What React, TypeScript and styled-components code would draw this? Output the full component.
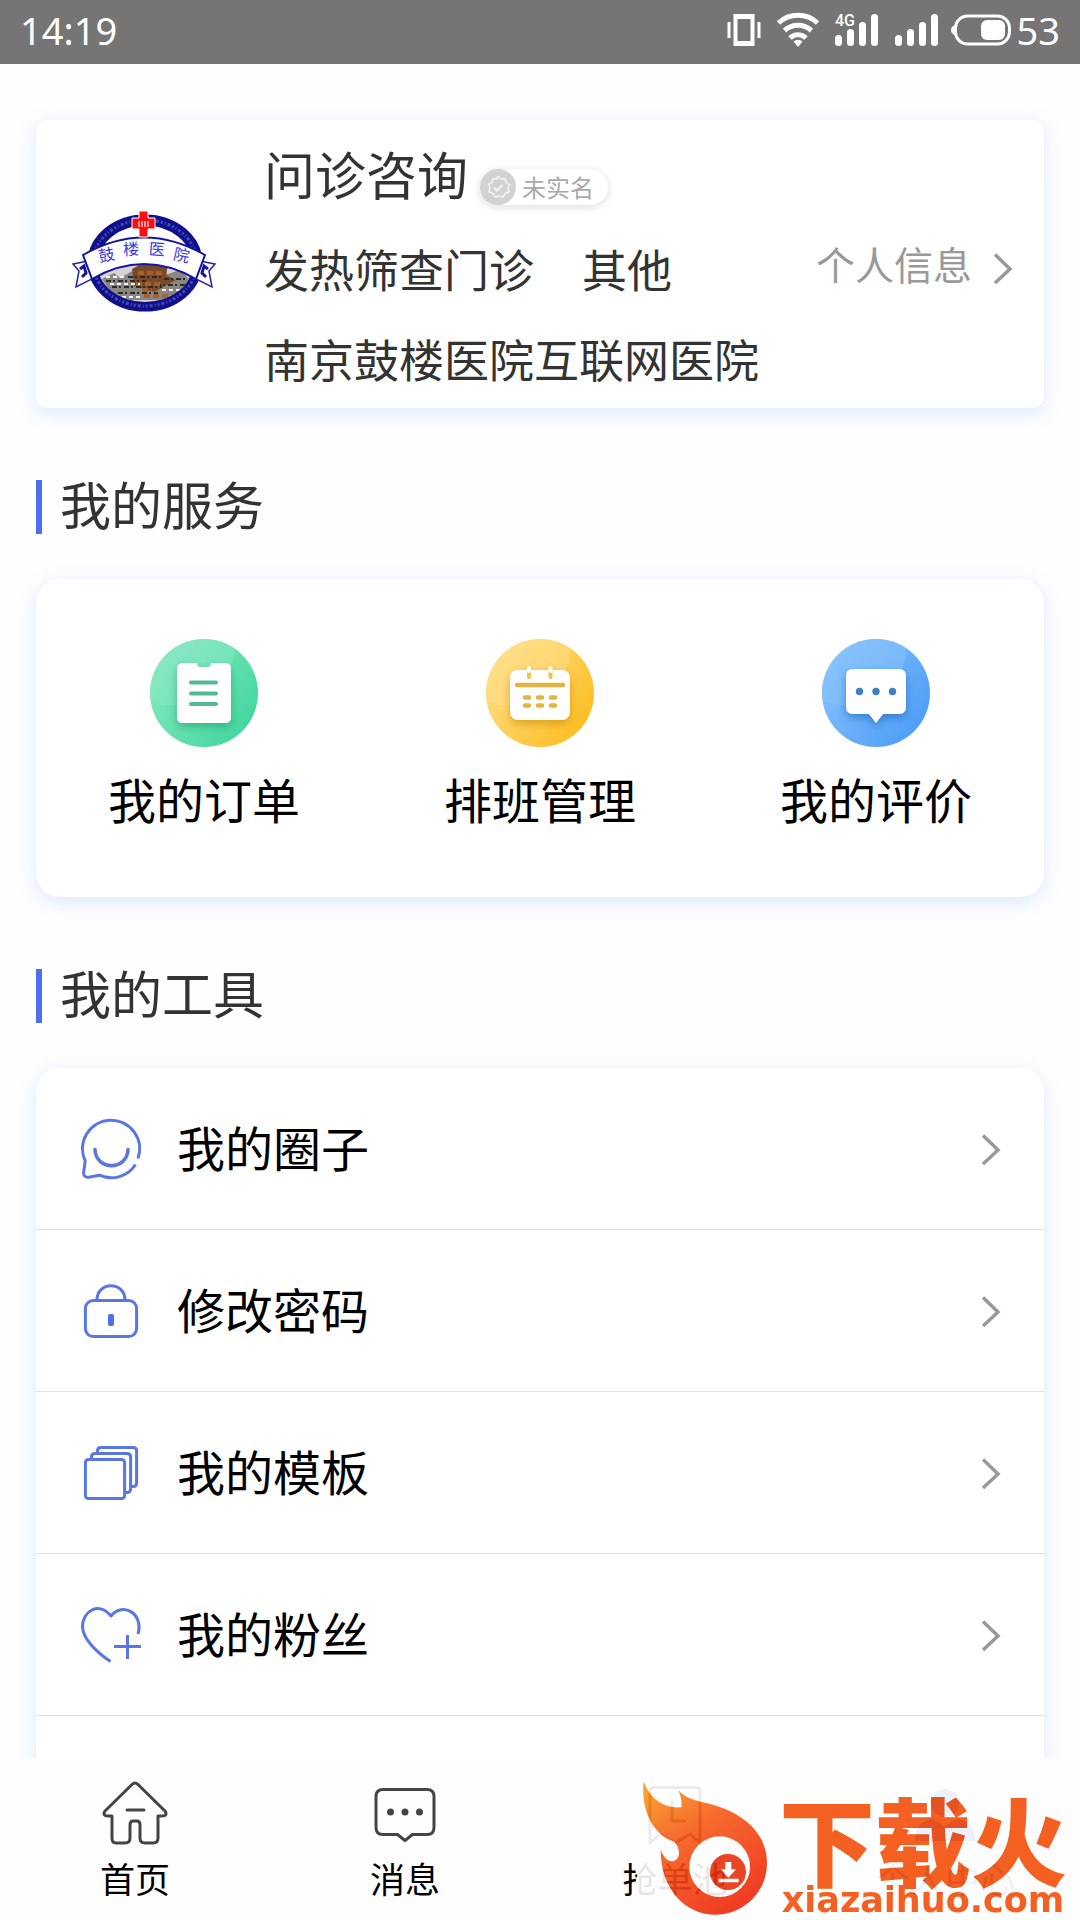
import React from "react";
import styled, { createGlobalStyle } from "styled-components";

const GlobalStyle = createGlobalStyle`
  * { box-sizing: border-box; }
  body {
    margin: 0;
    background: #fefefe;
    color: #333;
    font-family: "Noto Sans CJK SC", "Noto Sans", sans-serif;
  }
  a { color: inherit; text-decoration: none; }
  h1, h2, p, ul { margin: 0; padding: 0; font-weight: 400; }
  ul { list-style: none; }
  svg { display: block; flex: none; overflow: visible; }
`;

const Screen = styled.div`
  position: relative;
  display: flex;
  flex-direction: column;
  height: 100vh;
  overflow: hidden;
`;

const StatusBar = styled.header`
  flex: none;
  display: flex;
  align-items: center;
  justify-content: space-between;
  height: 64px;
  padding: 0 20px 4px;
  background: #757575;
  color: #fff;
  font-family: "Noto Sans", sans-serif;
  font-size: 38px;
  line-height: 60px;
`;

const StatusIcons = styled.div`
  display: flex;
  align-items: center;
  gap: 16px;
`;

const BatteryLevel = styled.span`
  display: flex;
  align-items: center;
  gap: 6px;
  margin-left: -4px;
`;

const Content = styled.main`
  flex: 1;
  min-height: 0;
  padding: 56px 36px 0;
  overflow-y: auto;
  scrollbar-width: none;
`;

const Card = styled.section<{ $radius: number }>`
  background: #fff;
  border-radius: ${(p) => p.$radius}px;
  box-shadow: 0 5px 20px rgba(80, 140, 255, 0.2);
`;

const ProfileCard = styled(Card)`
  display: flex;
  align-items: center;
  min-height: 288px;
  padding: 20px 31px 18px 36px;
`;

const ProfileInfo = styled.div`
  flex: 1;
  display: flex;
  flex-direction: column;
  gap: 30px;
  padding-left: 48px;
`;

const NameRow = styled.div`
  display: flex;
  align-items: flex-end;
  gap: 12px;
  padding-bottom: 4px;
`;

const Name = styled.h1`
  font-size: 51px;
  line-height: 64px;
`;

const Badge = styled.span`
  display: flex;
  align-items: center;
  gap: 6px;
  height: 36px;
  padding-right: 14px;
  border-radius: 18px;
  background: #fff;
  box-shadow: 0 2px 8px rgba(0, 0, 0, 0.14);
  color: #aaa;
  font-size: 24px;
  line-height: 34px;
`;

const InfoLine = styled.p`
  display: flex;
  gap: 48px;
  font-size: 45px;
  line-height: 60px;
`;

const ProfileLink = styled.a`
  display: flex;
  align-items: center;
  gap: 21px;
  padding-top: 6px;
  color: #999;
  font-size: 39px;
  line-height: 60px;
`;

const ProfileLinkText = styled.span`
  padding-bottom: 10px;
`;

const SectionTitle = styled.h2`
  display: flex;
  gap: 18px;
  height: 54px;
  margin: 72px 0 45px;
  font-size: 51px;
  line-height: 46px;

  &::before {
    content: "";
    width: 6px;
    background: #4e6ef2;
  }
`;

const Services = styled(Card)`
  display: grid;
  grid-template-columns: repeat(3, 1fr);
  padding: 60px 0 68px;
`;

const Service = styled.a`
  display: flex;
  flex-direction: column;
  align-items: center;
  gap: 20px;
  color: #000;
  font-size: 48px;
  line-height: 62px;
`;

const ToolRow = styled.li`
  height: 162px;
  border-bottom: 1px solid #e2e2e2;
`;

const ToolLink = styled.a`
  display: flex;
  align-items: center;
  height: 100%;
  padding: 0 43px 0 45px;
  gap: 36px;
  color: #000;
  font-size: 48px;
  line-height: 60px;
`;

const ToolName = styled.span`
  flex: 1;
  padding-bottom: 6px;
`;

const TabBar = styled.nav`
  flex: none;
  display: grid;
  grid-template-columns: repeat(4, 1fr);
  height: 162px;
  padding-top: 19px;
  background: #fefefe;
`;

const Tab = styled.a<{ $active?: boolean }>`
  display: flex;
  flex-direction: column;
  align-items: center;
  gap: 5px;
  color: ${(p) => (p.$active ? "#4e6ef2" : "#000")};
  font-size: 35px;
  line-height: 48px;
`;

const Watermark = styled.aside`
  position: absolute;
  right: 4px;
  bottom: 0;
  display: flex;
  align-items: flex-start;
  height: 142px;
  background: #fff;
  opacity: 0.9;
  color: #f4500a;
`;

const WatermarkText = styled.div`
  display: flex;
  flex-direction: column;
  align-items: center;
  width: 306px;
  padding-top: 12px;
`;

const WatermarkName = styled.span`
  font-size: 96px;
  font-weight: 900;
  line-height: 96px;
`;

const WatermarkSite = styled.span`
  font-family: "DejaVu Sans", sans-serif;
  font-size: 35px;
  font-weight: 700;
  line-height: 28px;
`;

const VibrateIcon = () => (
  <svg width="34" height="34" viewBox="0 0 34 34" fill="#fff">
    <path fillRule="evenodd" d="M6.500 1h21v32h-21zM10.500 6v22h13v-22z" />
    <path d="M.5 9h3v16h-3zM30.500 9h3v16h-3z" />
  </svg>
);

const WifiIcon = () => (
  <svg width="42" height="36" viewBox="0 0 42 36" fill="none" stroke="#fff" strokeWidth="5">
    <path d="M1.500 11C12.500 .8 29.500 .8 40.500 11M7.500 18.500C15.500 11.500 26.500 11.500 34.500 18.500M13 26C18 21.500 24 21.500 29 26" />
    <path d="M21 35l-4.500-5.500q4.500-3.500 9 0z" fill="#fff" stroke="none" />
  </svg>
);

const SignalIcon = ({ label }: { label?: string }) => (
  <svg width="44" height="34" viewBox="0 0 44 34" fill="#fff">
    <rect x="0" y="22" width="7" height="11" rx="3.500" />
    <rect x="12" y="16" width="7" height="17" rx="3.500" />
    <rect x="24" y="9" width="7" height="24" rx="3.500" />
    <rect x="36" y="1" width="7" height="32" rx="3.500" />
    {label && (
      <text x="0" y="13" fontSize="16" fontWeight="500" fontFamily="Roboto, sans-serif">
        {label}
      </text>
    )}
  </svg>
);

const BatteryIcon = () => (
  <svg width="60" height="32" viewBox="0 0 60 32">
    <rect x="4.500" y="2" width="54" height="28" rx="12" fill="none" stroke="#fff" strokeWidth="3" />
    <path d="M4 11v10q-4-1.500-4-5t4-5z" fill="#fff" />
    <rect x="30" y="6" width="24" height="20" rx="6" fill="#fff" />
  </svg>
);

const HospitalLogo = () => (
  <svg width="144" height="144" viewBox="0 0 144 144">
    <defs>
      <clipPath id="logoInner">
        <ellipse cx="73" cy="70" rx="48" ry="39" />
      </clipPath>
    </defs>
    <ellipse cx="73" cy="70" rx="52" ry="43" fill="#fff" stroke="#10108c" strokeWidth="11" />
    <ellipse cx="73" cy="70" rx="52" ry="43" fill="none" stroke="#6a6fc8" strokeWidth="3" strokeDasharray="2 2 1 2 3 2" opacity="0.600" />
    <g clipPath="url(#logoInner)">
      <path d="M24 82q48-26 100-4v34H24z" fill="#d6d4d0" />
      <path d="M30 86l12-6 6 5 14-8 8 5 12-10 14 9 12-4 10 10-8 20H44z" fill="#8a8681" />
      <path d="M60 76l16-9 20 5-2 10 10 5-22 12-20-6z" fill="#7a4a28" />
      <path d="M34 88h40M40 94h50M46 100h40M56 84h34M84 92h30M92 86h24" stroke="#2d2926" strokeWidth="2" strokeDasharray="5 2 2 3" />
      <path d="M66 80h26M64 91h24M72 103h30M70 97h10" stroke="#a5602c" strokeWidth="4" strokeDasharray="6 3" />
      <path d="M38 91h30M90 97h20M50 104h18M34 84h20" stroke="#f2f2ee" strokeWidth="2" strokeDasharray="4 3" />
    </g>
    <path d="M16 68l-15 3 6 7-3 16 18-9zM128 68l15 3-6 7 3 16-18-9z" fill="#fff" stroke="#2222a8" strokeWidth="1.500" />
    <path d="M8 76l4-3 2 7-4 4M136 76l-4-3-2 7 4 4" fill="none" stroke="#1414a0" strokeWidth="3" />
    <path d="M11 62Q72 27 133 62L124 86Q72 56 20 86z" fill="#fff" stroke="#1414a0" strokeWidth="2" />
    <g fill="#3b3be0" fontSize="16" fontFamily="Noto Sans CJK SC, sans-serif">
      <text x="26" y="68" transform="rotate(-12 34 60)">鼓</text>
      <text x="51" y="62" transform="rotate(-4 59 54)">楼</text>
      <text x="77" y="62" transform="rotate(4 85 54)">医</text>
      <text x="102" y="68" transform="rotate(12 110 60)">院</text>
    </g>
    <path d="M67 18h9v7h7v11h-7v8h-9v-8h-7V25h7z" fill="#fb1010" stroke="#fff" strokeWidth="1" />
    <path d="M67 28v6M70 28v6M73 28v6M76 28v6" stroke="#ffc4c4" strokeWidth="1.500" />
  </svg>
);

const VerifyIcon = () => (
  <svg width="36" height="36" viewBox="0 0 36 36">
    <circle cx="18" cy="18" r="18" fill="#d2d2d2" />
    <path
      d="M18 7.500l3 2.500 4-.5 1 4 3.500 2-1.500 3.500 1 4-4 1.500-2 3.500-4-1-4 1-2-3.500-4-1.500 1-4L8.500 15.500l3.500-2 1-4 4 .5z"
      fill="none" stroke="#f4f4f4" strokeWidth="1.500" strokeLinejoin="round"
    />
    <path d="M14 18.500l3 3 5.500-5.500" fill="none" stroke="#f4f4f4" strokeWidth="2" />
  </svg>
);

const Chevron = () => (
  <svg width="20" height="32" viewBox="0 0 20 32" fill="none" stroke="#999" strokeWidth="3.500">
    <path d="M2 2.500L17 17L2 31" />
  </svg>
);

type DiscProps = { id: string; from: string; to: string; shade: string; children: React.ReactNode };

const Disc = ({ id, from, to, shade, children }: DiscProps) => (
  <svg width="108" height="108" viewBox="0 0 108 108">
    <defs>
      <linearGradient id={`${id}Fill`} x1="0.100" y1="0.200" x2="0.900" y2="0.800">
        <stop offset="0" stopColor={from} />
        <stop offset="1" stopColor={to} />
      </linearGradient>
      <filter id={`${id}Shadow`} x="-30%" y="-30%" width="160%" height="160%">
        <feDropShadow dx="0" dy="4" stdDeviation="4" floodColor={shade} floodOpacity="0.600" />
      </filter>
      <clipPath id={`${id}Clip`}>
        <circle cx="54" cy="54" r="54" />
      </clipPath>
    </defs>
    <circle cx="54" cy="54" r="54" fill={`url(#${id}Fill)`} />
    <path d="M0 0h84v18A62 62 0 0 1 0 62z" fill={from} opacity="0.550" clipPath={`url(#${id}Clip)`} />
    <g filter={`url(#${id}Shadow)`}>{children}</g>
  </svg>
);

const OrdersIcon = () => (
  <Disc id="orders" from="#86e8c3" to="#45d79f" shade="#1f9c6c">
    <path d="M33 24h14q0 4 3 4h8q3 0 3-4h14q6 0 6 6v48q0 6-6 6H33q-6 0-6-6V30q0-6 6-6z" fill="#fff" />
    <path d="M41 43.500h25M41 54.500h25M41 65h25" stroke="#52bb93" strokeWidth="4" strokeLinecap="round" />
  </Disc>
);

const ScheduleIcon = () => (
  <Disc id="schedule" from="#ffdf87" to="#fdbe25" shade="#c88a00">
    <rect x="24" y="31" width="60" height="50" rx="8" fill="#fff" />
    <path d="M43 29v9M64.500 29v9" stroke="#f2c14a" strokeWidth="4" strokeLinecap="round" />
    <path d="M43 29v3M64.500 29v3" stroke="#fff" strokeWidth="4" strokeLinecap="round" />
    <path d="M31 46h46" stroke="#e5b441" strokeWidth="4.500" strokeLinecap="round" />
    <path d="M39 58.500h4M52 58.500h4M65 58.500h4M39 66.500h4M52 66.500h4M65 66.500h4" stroke="#e5b441" strokeWidth="4.500" strokeLinecap="round" />
  </Disc>
);

const ReviewsIcon = () => (
  <Disc id="reviews" from="#86c1fc" to="#4f9ff7" shade="#1f64b8">
    <path d="M31 30h46q7 0 7 7v31q0 7-7 7H61l-7 9-7-9H31q-7 0-7-7V37q0-7 7-7z" fill="#fff" />
    <g fill="#3f7fc4">
      <circle cx="37.500" cy="52.500" r="3.700" />
      <circle cx="54" cy="52.500" r="3.700" />
      <circle cx="70.500" cy="52.500" r="3.700" />
    </g>
  </Disc>
);

const LineIcon = ({ children }: { children: React.ReactNode }) => (
  <svg width="60" height="60" viewBox="0 0 60 60" fill="none" stroke="#5a76e4" strokeWidth="3" strokeLinejoin="round">
    {children}
  </svg>
);

const CircleIcon = () => (
  <LineIcon>
    <path d="M57 39.500A28.600 28.600 0 1 0 4.200 42L2.600 53.500Q2.400 58.700 7.500 58.200L18.500 56.200A28.600 28.600 0 0 0 54.500 45.500" />
    <path d="M14 30.500C15 52 46 52 47 30.500" strokeWidth="3.600" strokeLinecap="round" />
  </LineIcon>
);

const LockIcon = () => (
  <LineIcon>
    <rect x="4.400" y="19.400" width="51.200" height="36.200" rx="8" />
    <path d="M16 19C16 0 44 0 44 19" />
    <rect x="27" y="33" width="6" height="12" rx="2" fill="#4e6ef2" stroke="none" />
  </LineIcon>
);

const TemplateIcon = () => (
  <LineIcon>
    <rect x="4.400" y="16.400" width="39.200" height="39.200" rx="3" />
    <path d="M10.500 15.500V14q0-3.600 3.500-3.600h32q3.600 0 3.600 3.600v32q0 3.600-3.600 3.600h-2M16.500 9.500V8q0-3.600 3.500-3.600h32q3.600 0 3.600 3.600v32q0 3.600-3.600 3.600h-2" />
  </LineIcon>
);

const FansIcon = () => (
  <LineIcon>
    <path d="M57 29C63 9 42-4 30 11C18-4 1.500 6 1.500 21.500C1.500 33 15 47 29.500 56.500" />
    <path d="M33 41.500h27M46.500 30v24" />
  </LineIcon>
);

const TabIcon = ({ children }: { children: React.ReactNode }) => (
  <svg width="72" height="72" viewBox="0 0 72 72" fill="none" stroke="#444" strokeWidth="3" strokeLinejoin="round" strokeLinecap="round">
    {children}
  </svg>
);

const HomeIcon = () => (
  <TabIcon>
    <path d="M33 7.500q3-3 6 0L66 34q3 5-3 5h-4v22q0 5-5 5H46q-5 0-5-5V48q0-4-3-4h-4q-3 0-3 4v13q0 5-5 5h-9q-4 0-4-5V39H9q-6 0-3-5z" />
    <path d="M28 33h17" />
  </TabIcon>
);

const MessageIcon = () => (
  <TabIcon>
    <path d="M14 12.500h44q7 0 7 7v31q0 7-7 7H43.500L36 63.500l-7.500-6H14q-7 0-7-7v-31q0-7 7-7z" />
    <g fill="#444" stroke="none">
      <circle cx="21.500" cy="35" r="3.500" />
      <circle cx="36" cy="35" r="3.500" />
      <circle cx="50.500" cy="35" r="3.500" />
    </g>
  </TabIcon>
);

const OrderPoolIcon = () => (
  <TabIcon>
    <path d="M14 10.500h44q3 0 3 3V66l-10-9-15 9-15-9-10 9V13.500q0-3 3-3z" />
    <path d="M33 24v20h13" />
  </TabIcon>
);

const PersonIcon = () => (
  <TabIcon>
    <g fill="#4e6ef2" stroke="none">
      <circle cx="36" cy="26" r="14" />
      <path d="M6 64q0-20 18-22l12 7 12-7q18 2 18 22z" />
    </g>
  </TabIcon>
);

const FlameLogo = () => (
  <svg width="133" height="140" viewBox="110 113 399 420">
    <defs>
      <linearGradient id="flameFill" x1="0" y1="0" x2="0.600" y2="1">
        <stop offset="0" stopColor="#fba01e" />
        <stop offset="0.450" stopColor="#f75a18" />
        <stop offset="1" stopColor="#ee2a0c" />
      </linearGradient>
    </defs>
    <path
      d="M130 123C150 180 195 205 243 201C246 182 240 168 235 150C265 188 320 180 390 213C460 248 500 300 500 368C500 455 430 523 345 523C250 523 180 440 181 328C190 352 205 366 220 362C242 355 240 322 222 304C150 280 122 200 130 123Z"
      fill="url(#flameFill)"
    />
    <circle cx="358" cy="379" r="91" fill="#fff" />
    <circle cx="383" cy="395" r="54" fill="#e8310f" />
    <path d="M375 365h18v22h14l-23 25-23-25h14zM355 415h60v11h-60z" fill="#fff" />
  </svg>
);

const services = [
  { name: "我的订单", Icon: OrdersIcon },
  { name: "排班管理", Icon: ScheduleIcon },
  { name: "我的评价", Icon: ReviewsIcon },
];

const tools = [
  { name: "我的圈子", Icon: CircleIcon },
  { name: "修改密码", Icon: LockIcon },
  { name: "我的模板", Icon: TemplateIcon },
  { name: "我的粉丝", Icon: FansIcon },
];

const tabs = [
  { name: "首页", Icon: HomeIcon },
  { name: "消息", Icon: MessageIcon },
  { name: "抢单池", Icon: OrderPoolIcon },
  { name: "个人中心", Icon: PersonIcon, active: true },
];

export default function App() {
  return (
    <Screen>
      <GlobalStyle />
      <StatusBar>
        <span>14:19</span>
        <StatusIcons>
          <VibrateIcon />
          <WifiIcon />
          <SignalIcon label="4G" />
          <SignalIcon />
          <BatteryLevel>
            <BatteryIcon />
            53
          </BatteryLevel>
        </StatusIcons>
      </StatusBar>

      <Content>
        <ProfileCard $radius={12}>
          <HospitalLogo />
          <ProfileInfo>
            <NameRow>
              <Name>问诊咨询</Name>
              <Badge>
                <VerifyIcon />
                未实名
              </Badge>
            </NameRow>
            <InfoLine>
              <span>发热筛查门诊</span>
              <span>其他</span>
            </InfoLine>
            <InfoLine>南京鼓楼医院互联网医院</InfoLine>
          </ProfileInfo>
          <ProfileLink href="#profile">
            <ProfileLinkText>个人信息</ProfileLinkText>
            <Chevron />
          </ProfileLink>
        </ProfileCard>

        <SectionTitle>我的服务</SectionTitle>
        <Services $radius={24}>
          {services.map(({ name, Icon }) => (
            <Service key={name} href="#service">
              <Icon />
              {name}
            </Service>
          ))}
        </Services>

        <SectionTitle>我的工具</SectionTitle>
        <Card $radius={24}>
          <ul>
            {tools.map(({ name, Icon }) => (
              <ToolRow key={name}>
                <ToolLink href="#tool">
                  <Icon />
                  <ToolName>{name}</ToolName>
                  <Chevron />
                </ToolLink>
              </ToolRow>
            ))}
            <ToolRow />
          </ul>
        </Card>
      </Content>

      <TabBar>
        {tabs.map(({ name, Icon, active }) => (
          <Tab key={name} href="#tab" $active={active}>
            <Icon />
            {name}
          </Tab>
        ))}
      </TabBar>

      <Watermark>
        <FlameLogo />
        <WatermarkText>
          <WatermarkName>下载火</WatermarkName>
          <WatermarkSite>xiazaihuo.com</WatermarkSite>
        </WatermarkText>
      </Watermark>
    </Screen>
  );
}
